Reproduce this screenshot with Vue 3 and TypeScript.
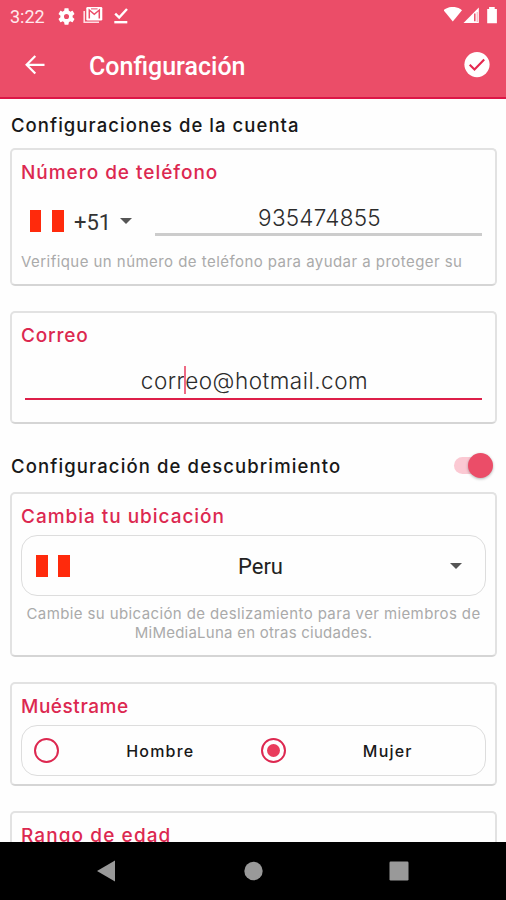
<script setup lang="ts">
import { ref } from 'vue'

const phone = ref('935474855')
const email = ref({ before: 'corr', after: 'eo@hotmail.com' })
const discovery = ref(true)
const gender = ref<'Hombre' | 'Mujer'>('Mujer')
const genders = ['Hombre', 'Mujer'] as const
</script>

<template>
  <div class="screen">
    <header class="header">
      <div class="status">
        <span class="clock">3:22</span>
        <svg class="gear" width="17" height="17" viewBox="2 2 20 20">
          <path fill="#fff" fill-rule="evenodd" d="M19.14 12.94c.04-.3.06-.61.06-.94 0-.32-.02-.64-.07-.94l2.03-1.58c.18-.14.23-.41.12-.61l-1.92-3.32c-.12-.22-.37-.29-.59-.22l-2.39.96c-.5-.38-1.03-.7-1.62-.94l-.36-2.54c-.04-.24-.24-.41-.48-.41h-3.84c-.24 0-.43.17-.47.41l-.36 2.54c-.59.24-1.13.57-1.62.94l-2.39-.96c-.22-.08-.47 0-.59.22L2.74 8.87c-.12.21-.08.47.12.61l2.03 1.58c-.05.3-.09.63-.09.94s.02.64.07.94l-2.03 1.58c-.18.14-.23.41-.12.61l1.92 3.32c.12.22.37.29.59.22l2.39-.96c.5.38 1.03.7 1.62.94l.36 2.54c.05.24.24.41.48.41h3.84c.24 0 .44-.17.47-.41l.36-2.54c.59-.24 1.13-.56 1.62-.94l2.39.96c.22.08.47 0 .59-.22l1.92-3.32c.12-.22.07-.47-.12-.61l-2.01-1.58zM12 15a3 3 0 1 1 0-6 3 3 0 0 1 0 6z" />
        </svg>
        <svg class="mail" width="20" height="18" viewBox="0 0 20 18">
          <path d="M1.2 4v11.3H16" fill="none" stroke="#ffdde3" stroke-width="1.6" />
          <rect x="3.3" y="0" width="16" height="13.4" rx="1.2" fill="#fff" />
          <path d="M6.3 11.4V3l5 4.2 5-4.2v8.4" fill="none" stroke="#eb4d68" stroke-width="1.5" />
          <path d="M8 1.9h6.6" stroke="#eb4d68" stroke-width="1" />
        </svg>
        <svg class="done" width="14" height="17" viewBox="0 0 14 17">
          <path d="M1.2 5.6l4 4L13 1" fill="none" stroke="#fff" stroke-width="2.4" />
          <path d="M.3 14.2h13" stroke="#fff" stroke-width="2.4" />
        </svg>
        <span class="spacer"></span>
        <svg width="54" height="18" viewBox="0 0 54 18">
          <path d="M-.5 3.2C5-1.2 13-1.2 18 3.2L8.8 14.6z" fill="#fff" />
          <path d="M19.5 16L34.8 .4V16z" fill="#fff" />
          <path d="M30.8 6.6v7.6" stroke="#eb4d68" stroke-width="1.5" />
          <path d="M33.2 5v10" stroke="#f6a4b2" stroke-width="1" />
          <path d="M43.2 2h1.9V.1h5.6V2h2.2v14.2h-9.7z" fill="#fff" />
        </svg>
      </div>
      <div class="toolbar">
        <svg width="20" height="20" viewBox="0 0 20 20" fill="none" stroke="#fff" stroke-width="2.2">
          <path d="M19.5 9.8H2M10.3 1L1.6 9.8l8.7 8.8" />
        </svg>
        <h1>Configuración</h1>
        <svg width="26" height="26" viewBox="0 0 26 26">
          <circle cx="13" cy="12.6" r="12.6" fill="#fff" />
          <path d="M5.7 12.8l4.8 4.7L20.2 7.4" fill="none" stroke="#e5284f" stroke-width="2.1" />
        </svg>
      </div>
    </header>

    <main class="content">
      <h2 class="section account">Configuraciones de la cuenta</h2>

      <section class="card phone-card">
        <h3 class="t-phone">Número de teléfono</h3>
        <div class="phone-row">
          <div class="prefix">
            <span class="flag"></span>
            <span class="code">+51</span>
            <span class="caret"></span>
          </div>
          <div class="field phone">{{ phone }}</div>
        </div>
        <p class="hint verify">Verifique un número de teléfono para ayudar a proteger su</p>
      </section>

      <section class="card mail-card">
        <h3 class="t-mail">Correo</h3>
        <div class="field email"><span>{{ email.before }}</span><i class="cursor"></i><span>{{ email.after }}</span></div>
      </section>

      <div class="discovery">
        <h2 class="section disc">Configuración de descubrimiento</h2>
        <button class="switch" :class="{ on: discovery }" @click="discovery = !discovery"><span></span></button>
      </div>

      <section class="card place-card">
        <h3 class="t-place">Cambia tu ubicación</h3>
        <div class="box select">
          <span class="flag"></span>
          <span class="country">Peru</span>
          <span class="caret"></span>
        </div>
        <p class="hint place">
          <span class="line-a">Cambie su ubicación de deslizamiento para ver miembros de</span>
          <span class="line-b">MiMediaLuna en otras ciudades.</span>
        </p>
      </section>

      <section class="card show-card">
        <h3 class="t-show">Muéstrame</h3>
        <div class="box radios">
          <div v-for="g in genders" :key="g" class="option" @click="gender = g">
            <span class="radio" :class="{ checked: gender === g }"></span>
            <span class="name">{{ g }}</span>
          </div>
        </div>
      </section>

      <section class="card age-card">
        <h3 class="t-age">Rango de edad</h3>
      </section>
    </main>

    <nav class="nav">
      <svg width="506" height="58" viewBox="0 0 506 58" fill="#999">
        <path d="M97 29l18-10.6v21.2z" />
        <circle cx="253.5" cy="29" r="9.2" />
        <rect x="389.5" y="19.5" width="19" height="19" rx="1.2" />
      </svg>
    </nav>
  </div>
</template>

<style>
body {
  margin: 0;
  overflow: hidden;
}
</style>

<style scoped>
* {
  box-sizing: border-box;
}
.screen {
  width: 506px;
  height: 900px;
  display: flex;
  flex-direction: column;
  background: #fefefe;
  overflow: hidden;
  font-family: Inter, "Liberation Sans", sans-serif;
  color: #181818;
}
h1, h2, h3, p {
  margin: 0;
  font-weight: 450;
  white-space: nowrap;
}
.header {
  height: 99px;
  flex: none;
  background: #eb4d68;
  border-bottom: 2px solid #dc1646;
  color: #fff;
  font-family: Roboto, sans-serif;
}
.status {
  height: 32px;
  display: flex;
  align-items: center;
  padding: 0 8px 0 10px;
}
.clock {
  width: 48px;
  font-size: 18px;
  color: #ffe9ed;
}
.mail {
  margin-left: 8px;
}
.done {
  margin-left: 11px;
}
.spacer {
  flex: 1;
}
.toolbar {
  height: 65px;
  display: flex;
  align-items: center;
  padding: 0 16px 0 25px;
}
.toolbar h1 {
  flex: 1;
  margin-left: 44px;
  padding-top: 4px;
  font-size: 25px;
  font-weight: 500;
  line-height: 30px;
}
.content {
  flex: 1;
  min-height: 0;
  overflow: hidden;
  padding: 0 9px 0 10px;
}
.section {
  font-size: 18.5px;
  line-height: 24px;
}
.account {
  padding: 14px 0 11px 1px;
  letter-spacing: 1.05px;
}
.disc {
  letter-spacing: 1.12px;
}
.card {
  border: 2px solid #e2e2e2;
  border-bottom-color: #d5d5d5;
  border-radius: 5px;
  padding: 0 9px;
}
h3 {
  color: #dc2850;
  font-size: 19px;
  line-height: 24px;
  padding-top: 11px;
  letter-spacing: 0.97px;
}
.t-mail {
  letter-spacing: 0.8px;
}
.t-show {
  letter-spacing: 0.55px;
}
.t-age {
  letter-spacing: 1.1px;
}
.phone-card {
  height: 138px;
}
.phone-row {
  display: flex;
  height: 51px;
  padding-right: 4px;
}
.prefix {
  width: 134px;
  padding: 21px 0 0 9px;
  display: flex;
  align-items: center;
  height: 51px;
}
.flag {
  flex: none;
  width: 34px;
  height: 22px;
  background: linear-gradient(90deg, #ff2a0c 0 11.5px, #fff 11.5px 22.5px, #ff2a0c 22.5px);
}
.code {
  width: 36px;
  margin: 2px 10px 0 10px;
  font-family: Roboto, sans-serif;
  font-size: 22px;
  color: #333;
}
.caret {
  border: 6px solid transparent;
  border-top-color: #555;
  border-bottom: 0;
}
.field {
  flex: 1;
  text-align: center;
  font-size: 22.5px;
  font-weight: 300;
  color: #2c2c2c;
}
.phone {
  border-bottom: 3px solid #ccc;
  line-height: 28px;
  padding: 19px 0 0 2px;
  letter-spacing: 0.25px;
}
.hint {
  color: #aaa;
  font-weight: 400;
  font-size: 15px;
  line-height: 19px;
}
.verify {
  padding-top: 16px;
  letter-spacing: 0.45px;
}
.line-a {
  letter-spacing: 0.39px;
}
.line-b {
  letter-spacing: 0.24px;
}
.mail-card {
  height: 113px;
  margin-top: 25px;
}
.email {
  display: flex;
  justify-content: center;
  margin: 0 4px;
  height: 52px;
  padding: 19px 0 0 2px;
  line-height: 28px;
  letter-spacing: 0.5px;
  border-bottom: 2px solid #dd1f49;
}
.cursor {
  width: 2px;
  height: 28px;
  margin: -1px -1px 0;
  background: #ee6a84;
}
.discovery {
  height: 68px;
  padding: 15px 4px 0 1px;
  display: flex;
  justify-content: space-between;
}
.discovery .section {
  padding-top: 15px;
}
.switch {
  width: 39px;
  height: 26px;
  margin-top: 13px;
  border: 0;
  padding: 0;
  display: grid;
  align-items: center;
  background: none;
}
.switch::before,
.switch span {
  grid-area: 1 / 1;
}
.switch::before {
  content: "";
  width: 36px;
  height: 17px;
  border-radius: 9px;
  background: #fbc9d3;
}
.switch span {
  width: 25px;
  height: 25px;
  border-radius: 50%;
  background: #eb4d68;
  box-shadow: 0 1px 3px rgba(0, 0, 0, 0.3);
}
.switch.on span {
  justify-self: end;
}
.place-card {
  height: 165px;
}
.box {
  border: 1px solid #ddd;
  border-radius: 16px;
}
.select {
  height: 61px;
  margin-top: 6px;
  display: flex;
  align-items: center;
  padding: 0 23px 0 14px;
}
.country {
  flex: 1;
  text-align: center;
  padding: 2px 0 0 1px;
  font-family: Roboto, sans-serif;
  font-size: 22px;
  color: #222;
}
.place {
  padding-top: 8px;
  display: flex;
  flex-direction: column;
  align-items: center;
}
.show-card {
  height: 104px;
  margin-top: 25px;
}
.radios {
  height: 51px;
  margin-top: 6px;
  display: flex;
  padding: 0 11px 0 11.5px;
}
.option {
  display: flex;
  align-items: center;
  width: 227.5px;
  flex: none;
}
.radio {
  width: 25px;
  height: 25px;
  border: 2px solid #dd2850;
  border-radius: 50%;
  display: grid;
  place-items: center;
}
.radio.checked::after {
  content: "";
  width: 13px;
  height: 13px;
  border-radius: 50%;
  background: #e93c5c;
}
.name {
  width: 202.5px;
  padding-left: 1px;
  text-align: center;
  font-size: 16px;
  font-weight: 500;
  letter-spacing: 1.2px;
}
.age-card {
  height: 104px;
  margin-top: 25px;
}
.nav {
  height: 58px;
  flex: none;
  background: #000;
}
.nav svg {
  display: block;
}
</style>
